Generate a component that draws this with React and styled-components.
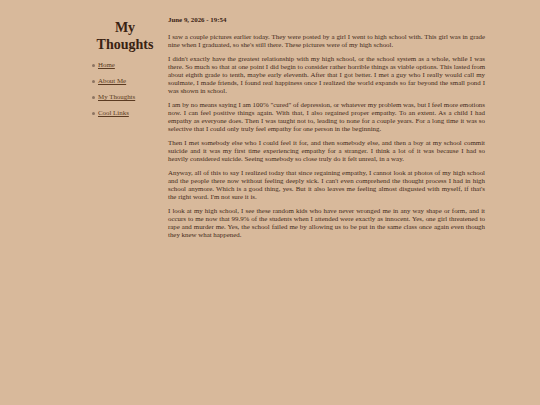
import React from 'react';
import styled, { createGlobalStyle } from 'styled-components';

const BACKGROUND = '#d8b99b';
const INK = '#43291a';
const LINK = '#5b3b22';

const GlobalStyle = createGlobalStyle`
  html, body {
    margin: 0;
    padding: 0;
    background: ${BACKGROUND};
  }
  body {
    font-family: "Liberation Serif", "Times New Roman", serif;
    color: ${INK};
  }
`;

const Page = styled.div`
  display: flex;
  align-items: flex-start;
  padding: 16px 0 0 90px;
  min-height: 405px;
  box-sizing: border-box;
`;

const Sidebar = styled.aside`
  width: 70px;
  flex-shrink: 0;
  padding-top: 3px;
`;

const SiteTitle = styled.h1`
  margin: 0 0 8px;
  font-size: 14px;
  line-height: 17px;
  font-weight: bold;
  text-align: center;
  color: #3a2212;
`;

const Nav = styled.ul`
  list-style: none;
  margin: 0;
  padding: 0 0 0 2px;
  display: flex;
  flex-direction: column;
  gap: 8px;
`;

const NavItem = styled.li`
  display: flex;
  align-items: center;
  gap: 3px;
  font-size: 6.9px;
  line-height: 8px;

  &::before {
    content: '';
    width: 3px;
    height: 3px;
    border-radius: 50%;
    background: #8c7462;
  }
`;

const NavLink = styled.a`
  color: ${LINK};
  text-decoration: underline;
`;

const Main = styled.main`
  width: 317px;
  margin-left: 8px;
  font-size: 6.9px;
  line-height: 8px;
  text-align: justify;
`;

const PostDate = styled.h2`
  margin: 0 0 9px;
  font-size: 6.9px;
  line-height: 8px;
  font-weight: bold;
  color: #3a2212;
`;

const Paragraph = styled.p`
  margin: 0 0 6px;
`;

const links = ['Home', 'About Me', 'My Thoughts', 'Cool Links'];

const paragraphs = [
  "I saw a couple pictures earlier today. They were posted by a girl I went to high school with. This girl was in grade nine when I graduated, so she's still there. These pictures were of my high school.",
  "I didn't exactly have the greatest relationship with my high school, or the school system as a whole, while I was there. So much so that at one point I did begin to consider rather horrible things as viable options. This lasted from about eighth grade to tenth, maybe early eleventh. After that I got better. I met a guy who I really would call my soulmate, I made friends, I found real happiness once I realized the world expands so far beyond the small pond I was shown in school.",
  'I am by no means saying I am 100% "cured" of depression, or whatever my problem was, but I feel more emotions now. I can feel positive things again. With that, I also regained proper empathy. To an extent. As a child I had empathy as everyone does. Then I was taught not to, leading to none for a couple years. For a long time it was so selective that I could only truly feel empathy for one person in the beginning.',
  'Then I met somebody else who I could feel it for, and then somebody else, and then a boy at my school commit suicide and it was my first time experiencing empathy for a stranger. I think a lot of it was because I had so heavily considered suicide. Seeing somebody so close truly do it felt unreal, in a way.',
  "Anyway, all of this to say I realized today that since regaining empathy, I cannot look at photos of my high school and the people there now without feeling deeply sick. I can't even comprehend the thought process I had in high school anymore. Which is a good thing, yes. But it also leaves me feeling almost disgusted with myself, if that's the right word. I'm not sure it is.",
  'I look at my high school, I see these random kids who have never wronged me in any way shape or form, and it occurs to me now that 99.9% of the students when I attended were exactly as innocent. Yes, one girl threatened to rape and murder me. Yes, the school failed me by allowing us to be put in the same class once again even though they knew what happened.',
];

const App = () => (
  <>
    <GlobalStyle />
    <Page>
      <Sidebar>
        <SiteTitle>
          My
          <br />
          Thoughts
        </SiteTitle>
        <Nav>
          {links.map((label) => (
            <NavItem key={label}>
              <NavLink href="#">{label}</NavLink>
            </NavItem>
          ))}
        </Nav>
      </Sidebar>
      <Main>
        <PostDate>June 9, 2026 - 19:54</PostDate>
        {paragraphs.map((text) => (
          <Paragraph key={text.slice(0, 20)}>{text}</Paragraph>
        ))}
      </Main>
    </Page>
  </>
);

export default App;
